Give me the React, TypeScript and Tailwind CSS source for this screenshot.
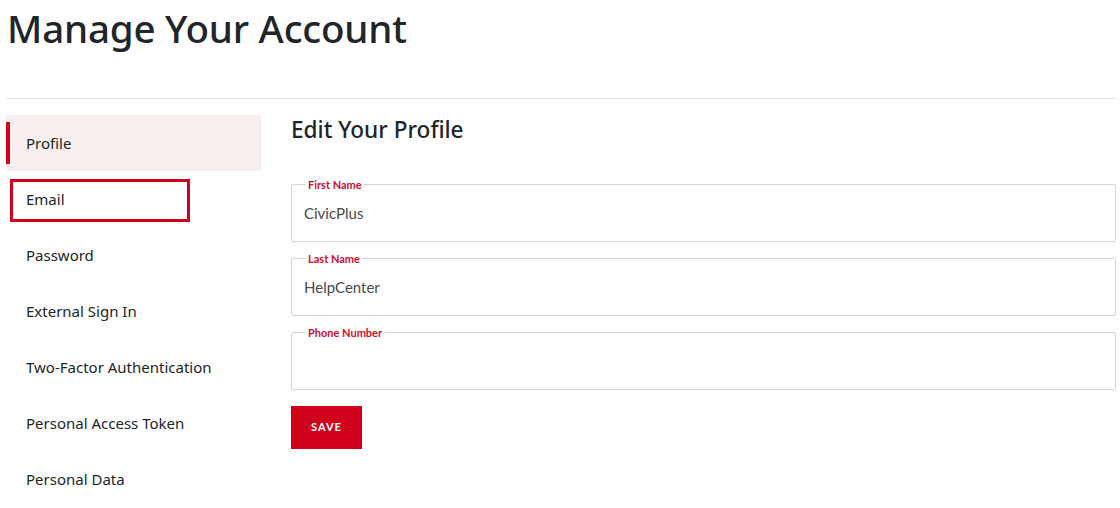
import React from "react";

const items = [
  "Profile",
  "Email",
  "Password",
  "External Sign In",
  "Two-Factor Authentication",
  "Personal Access Token",
  "Personal Data",
];

function Field({ label, value }: { label: string; value?: string }) {
  return (
    <fieldset className="m-0 h-[64px] rounded-[2px] border border-[#d4d4d8] px-[12px] pb-0 pt-0">
      <legend className="ml-[2px] px-[2px] text-[11px] font-bold leading-[12px] text-[#c8102e] [font-family:Lato,'Liberation_Sans',sans-serif]">
        <span className="relative top-[1px]">{label}</span>
      </legend>
      <div className="pt-[13px] text-[15px] leading-[20px] text-[#4a4a4a] [font-family:Lato,'Liberation_Sans',sans-serif]">
        {value ?? "\u00a0"}
      </div>
    </fieldset>
  );
}

export default function App() {
  return (
    <div className="h-[508px] w-[1120px] overflow-hidden bg-white text-[#212529] [font-family:'Noto_Sans','Open_Sans',sans-serif]">
      <div className="px-[6px]">
        <h1 className="pl-[1px] pt-[4px] text-[38.5px] font-medium leading-[48px] tracking-[-0.2px]">
          Manage Your Account
        </h1>
        <div className="mt-[46px] mr-[-2px] border-t border-[#e5e5e5]" />
        <div className="mt-[16px] flex">
          <nav className="flex w-[255px] shrink-0 flex-col">
            {items.map((it, i) =>
              i === 0 ? (
                <div key={it} className="relative flex h-[56px] items-center bg-[#f9efee] pl-[20px] text-[15px]">
                  <span className="absolute left-0 top-[7px] h-[42px] w-[4px] bg-[#d0021b]" />
                  {it}
                </div>
              ) : i === 1 ? (
                <div key={it} className="h-[56px] pt-[8px]">
                  <div className="ml-[4px] flex h-[43px] w-[180px] items-center border-[3px] border-[#d0021b] pl-[13px] pb-[2px] text-[15px]">
                    {it}
                  </div>
                </div>
              ) : (
                <div key={it} className="flex h-[56px] items-center pl-[20px] text-[15px]">
                  {it}
                </div>
              )
            )}
          </nav>
          <main className="ml-[30px] flex-1 mr-[-2px]">
            <h2 className="text-[22.6px] font-medium leading-[30px]">Edit Your Profile</h2>
            <div className="mt-[33px] flex flex-col gap-[10px]">
              <Field label="First Name" value="CivicPlus" />
              <Field label="Last Name" value="HelpCenter" />
              <Field label="Phone Number" />
            </div>
            <button className="mt-[16px] h-[43px] w-[71px] bg-[#d0021b] text-[11px] font-bold tracking-[1px] text-white [font-family:Lato,'Liberation_Sans',sans-serif]">
              SAVE
            </button>
          </main>
        </div>
      </div>
    </div>
  );
}
